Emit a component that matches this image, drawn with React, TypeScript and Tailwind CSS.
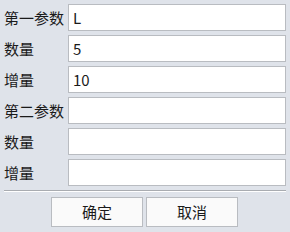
import React, { useState } from "react";

const rows = [
  { label: "第一参数", value: "L" },
  { label: "数量", value: "5" },
  { label: "增量", value: "10" },
  { label: "第二参数", value: "" },
  { label: "数量", value: "" },
  { label: "增量", value: "" },
];

const App: React.FC = () => {
  const [values, setValues] = useState(rows.map((r) => r.value));

  return (
    <div
      className="w-[290px] h-[232px] bg-[#dfe3ea] px-1 pt-1 text-[15px] text-[#1a1a1a]"
      style={{ fontFamily: '"Noto Sans CJK SC", "Noto Sans", sans-serif' }}
    >
      <div className="flex flex-col gap-1">
        {rows.map((row, i) => (
          <div key={i} className="flex items-center h-[27px]">
            <span className="w-[64px] leading-none">{row.label}</span>
            <input
              value={values[i]}
              onChange={(e) => {
                const next = [...values];
                next[i] = e.target.value;
                setValues(next);
              }}
              className="w-[218px] h-[27px] bg-white border border-[#b9bcc1] px-[4px] text-[15px] outline-none"
            />
          </div>
        ))}
      </div>

      <div className="mt-1 w-[282px] h-[2px] bg-[#a9acb1] border-b border-white" />

      <div className="flex gap-[3px] mt-[5px] ml-[47px]">
        <button className="w-[92px] h-[30px] bg-[#fafafa] border border-[#b9bcc1] text-[15px]">
          确定
        </button>
        <button className="w-[92px] h-[30px] bg-[#fafafa] border border-[#b9bcc1] text-[15px]">
          取消
        </button>
      </div>
    </div>
  );
};

export default App;
